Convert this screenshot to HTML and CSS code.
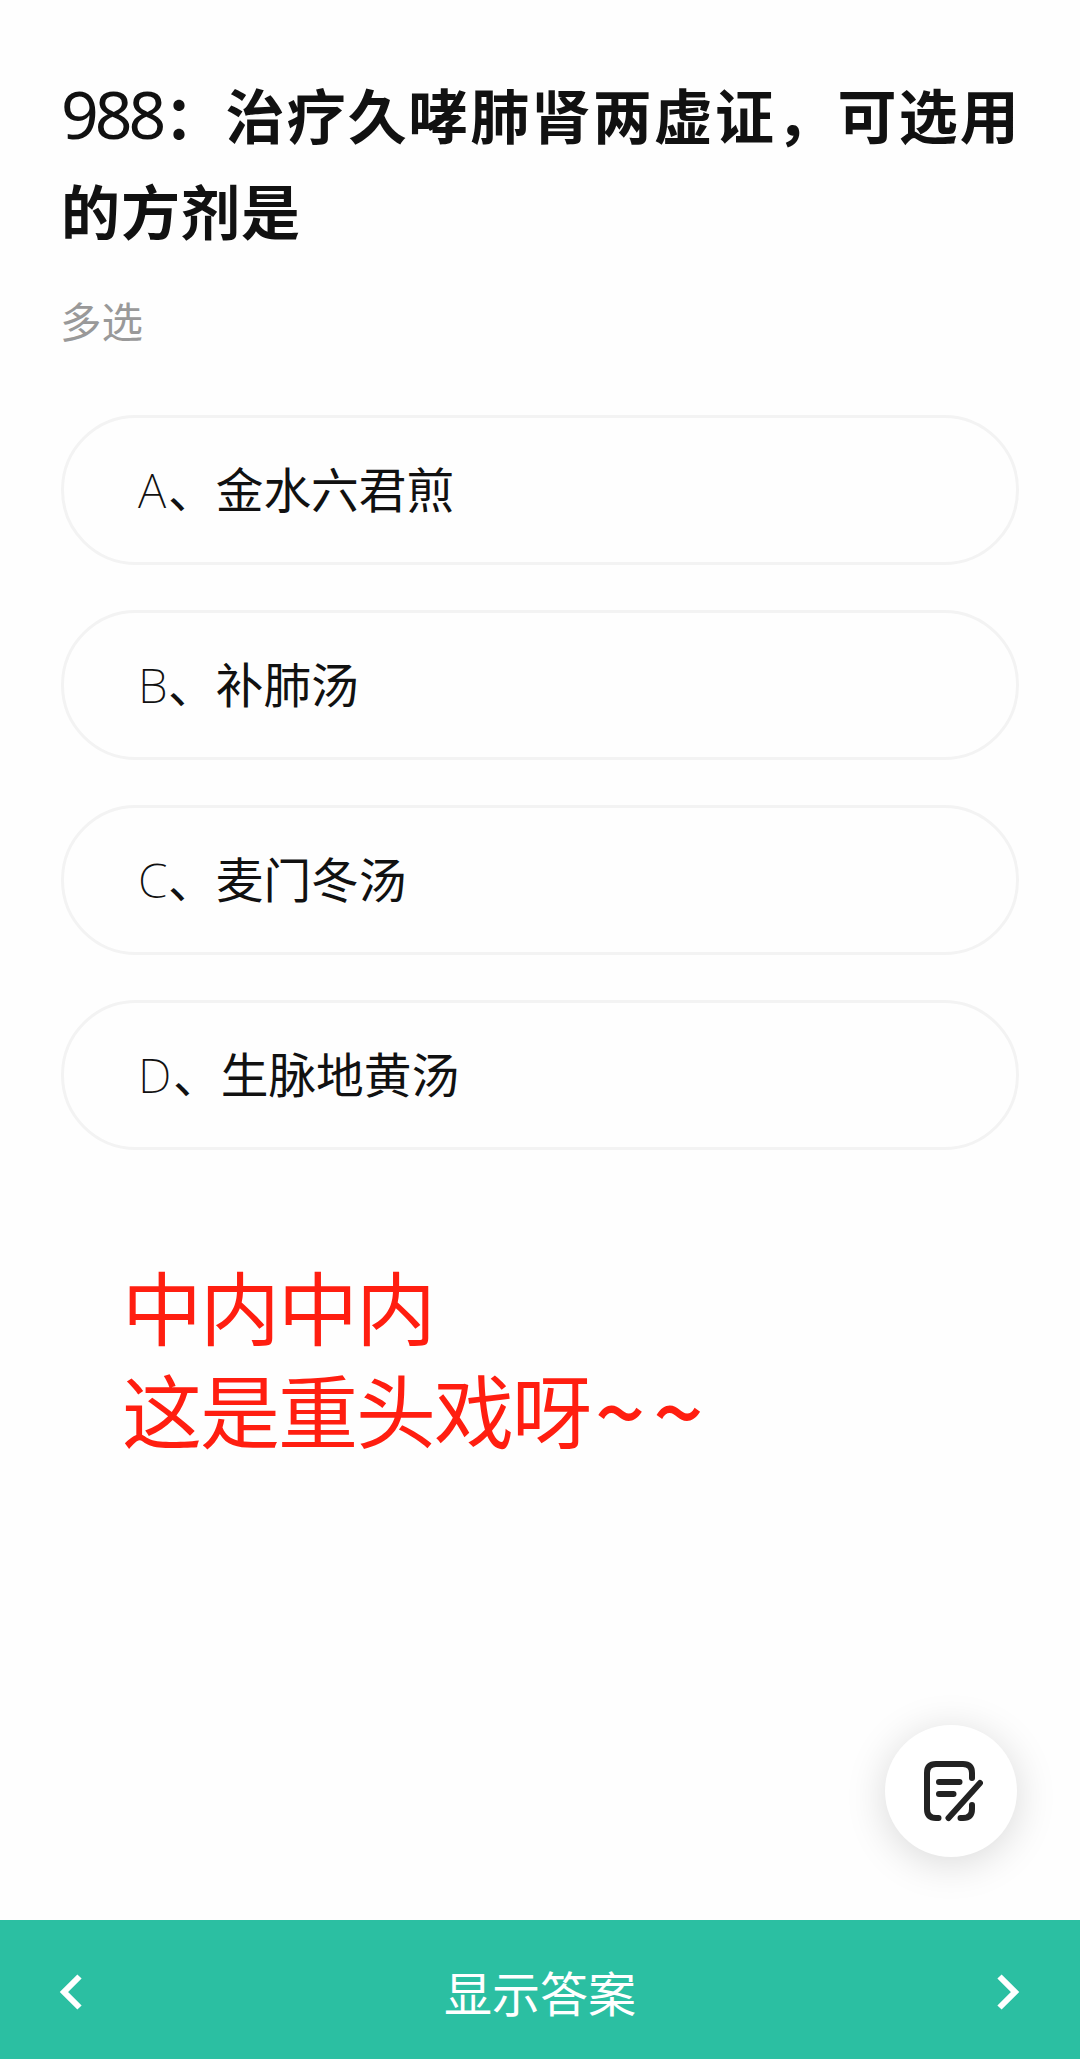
FILE: index.html
```html
<!DOCTYPE html>
<html lang="zh-CN">
<head>
<meta charset="utf-8">
<title>988</title>
<link rel="stylesheet" href="styles.css">
</head>
<body>
<div class="page">
  <main class="content">
    <h1 class="question"><span class="line first"><span class="number">988</span>：治疗久哮肺肾两虚证，可选用</span><span class="line">的方剂是</span></h1>
    <p class="kind">多选</p>
    <ul class="options">
      <li class="option"><span class="letter">A</span>、金水六君煎</li>
      <li class="option"><span class="letter">B</span>、补肺汤</li>
      <li class="option"><span class="letter">C</span>、麦门冬汤</li>
      <li class="option"><span class="letter letter-wide">D</span>、生脉地黄汤</li>
    </ul>
    <p class="remark">中内中内<br>这是重头戏呀<span class="tilde">~~</span></p>
  </main>
  <button class="note" aria-label="笔记">
    <svg width="60" height="62" viewBox="0 0 60 62" fill="none" stroke="#222" stroke-width="6" stroke-linecap="round" stroke-linejoin="round">
      <path d="M15.5 58H13Q4 58 4 49V13Q4 4 13 4H40Q49 4 49 13V18"/>
      <path d="M49 45V49Q49 58 40 58H37.500"/>
      <path d="M16 22H36.500M16 34H30.500M57 23L25.500 58"/>
    </svg>
  </button>
  <footer class="bar">
    <svg class="arrow" width="24" height="38" viewBox="0 0 24 38" fill="none" stroke="#fff" stroke-width="6"><path d="M20.500 3.500L5 19L20.500 34.500"/></svg>
    <span class="answer">显示答案</span>
    <svg class="arrow" width="24" height="38" viewBox="0 0 24 38" fill="none" stroke="#fff" stroke-width="6"><path d="M2.500 3.500L18 19L2.500 34.500"/></svg>
  </footer>
</div>
</body>
</html>
```
FILE: styles.css
```css
* { box-sizing: border-box; margin: 0; padding: 0; }
body { background: #fefefe; color: #111; font-family: "Noto Sans CJK SC", sans-serif; }
.page { position: relative; display: flex; flex-direction: column; height: 2059px; overflow: hidden; }
.content { flex: 1; padding: 66px 61px 0; }
.question { font-size: 59px; font-weight: 700; line-height: 96px; white-space: nowrap; }
.line { display: block; letter-spacing: 1px; }
.first { letter-spacing: 2.2px; }
.number { margin-right: 2px; font-family: "Noto Sans", sans-serif; font-size: 66px; font-weight: 400; letter-spacing: -4px; line-height: 1; }
.kind { margin: 32px 0 0 -1px; color: #999; font-size: 41.5px; font-weight: 400; line-height: 60px; }
.options { display: flex; flex-direction: column; gap: 45px; margin-top: 65px; list-style: none; }
.option { display: flex; align-items: baseline; height: 150px; padding-left: 74px; border: 3px solid #f3f3f3; border-radius: 75px; font-size: 47.7px; line-height: 140px; }
.letter { width: 30px; font-family: "Noto Sans", sans-serif; font-weight: 200; }
.letter-wide { width: 35px; }
.remark { margin: 103px 0 0 61px; color: #ff1e10; font-size: 80px; letter-spacing: -2px; line-height: 103px; white-space: nowrap; }
.tilde { position: relative; top: 4px; margin-left: 5px; font-size: 88px; font-weight: 500; letter-spacing: 8px; line-height: 1; }
.note { position: absolute; left: 885px; top: 1725px; width: 132px; height: 132px; padding: 0 0 0 3px; border: 0; border-radius: 50%; background: #fff; box-shadow: 0 6px 40px rgba(0, 0, 0, .15); display: flex; align-items: center; justify-content: center; }
.bar { display: flex; flex: none; align-items: center; justify-content: space-between; height: 139px; padding: 4px 59px 0; background: #2bbfa2; color: #fff; }
.answer { margin-top: -2px; font-size: 48px; font-weight: 400; line-height: 70px; }
```
